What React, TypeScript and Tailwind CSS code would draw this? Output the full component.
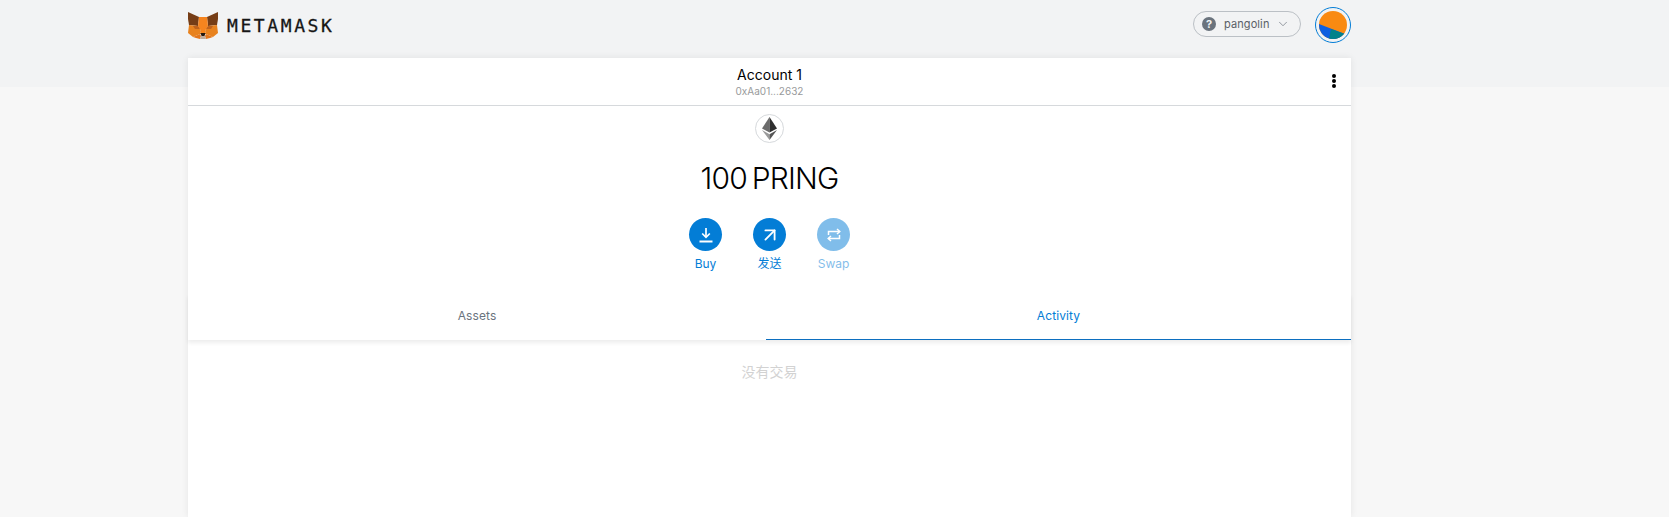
import { ArrowUpRight, ChevronDown } from 'lucide-react';

function FoxLogo() {
    return (
        <svg width="30" height="28" viewBox="0 0 30 28">
            <polygon points="0,1 11,6 10,15 1,14 0,8" fill="#763d16" />
            <polygon points="30,1 19,6 20,15 29,14 30,8" fill="#763d16" />
            <polygon points="11,6 19,6 20,15 17,20 13,20 10,15" fill="#f5841f" />
            <polygon points="1,14 10,15 13,20 12,23 5,26 0,22" fill="#e8821e" />
            <polygon points="29,14 20,15 17,20 18,23 25,26 30,22" fill="#e8821e" />
            <polygon points="5,15 10,15 12,18 7,18" fill="#c0621b" />
            <polygon points="25,15 20,15 18,18 23,18" fill="#c0621b" />
            <polygon points="12,23 13,20 17,20 18,23" fill="#f6851b" />
            <polygon points="12.5,22 17.5,22 16.5,25 13.5,25" fill="#24180e" />
            <polygon points="5,26 12,23 13,25 12,28 8,27" fill="#e4761b" />
            <polygon points="25,26 18,23 17,25 18,28 22,27" fill="#e4761b" />
            <polygon points="12,28 13,25 17,25 18,28" fill="#c0ad9e" />
        </svg>
    );
}

function EthIcon() {
    return (
        <svg width="15" height="23" viewBox="0 0 15 23">
            <polygon points="7.5,0 0,11.5 7.5,15.5" fill="#6b6b6b" />
            <polygon points="7.5,0 15,11.5 7.5,15.5" fill="#2f2f2f" />
            <polygon points="0,13 7.5,23 7.5,17.2" fill="#9a9a9a" />
            <polygon points="15,13 7.5,23 7.5,17.2" fill="#555555" />
        </svg>
    );
}

function Jazzicon() {
    return (
        <svg width="28" height="28" viewBox="0 0 28 28">
            <defs>
                <clipPath id="avatar-clip">
                    <circle cx="14" cy="14" r="14" />
                </clipPath>
            </defs>
            <g clipPath="url(#avatar-clip)">
                <rect width="28" height="28" fill="#f98a12" />
                <polygon points="0,13 26,23 26,28 0,28" fill="#0f5fe0" />
                <polygon points="10,28 12,18 26,23 23,28" fill="#01828a" />
            </g>
        </svg>
    );
}

function BuyIcon() {
    return (
        <svg width="16" height="16" viewBox="0 0 16 16" fill="none" stroke="white" strokeWidth="1.7">
            <path d="M8 1v9" />
            <path d="M4.2 6.5 8 10.3l3.8-3.8" />
            <path d="M1.5 14.5h13" strokeWidth="2" />
        </svg>
    );
}

function SwapIcon() {
    return (
        <svg width="16" height="16" viewBox="0 0 16 16" fill="none" stroke="white" strokeWidth="1.5">
            <path d="M2.5 8V4.5h11" />
            <path d="M11 2l2.8 2.5L11 7" />
            <path d="M13.5 8v3.5h-11" />
            <path d="M5 9l-2.8 2.5L5 14" />
        </svg>
    );
}

function ActionButton({ label, icon, disabled }: { label: string; icon: React.ReactNode; disabled?: boolean }) {
    return (
        <div className={`flex w-[64px] flex-col items-center ${disabled ? 'opacity-50' : ''}`}>
            <div className="flex h-[33px] w-[33px] items-center justify-center rounded-full bg-[#037dd6]">{icon}</div>
            <span className="mt-[4px] text-[12px] leading-[18px] text-[#037dd6]">{label}</span>
        </div>
    );
}

export default function App() {
    return (
        <div
            className="h-[517px] overflow-hidden bg-[#f7f7f7]"
            style={{ fontFamily: 'Inter, "Noto Sans CJK SC", sans-serif' }}
        >
            <div className="h-[87px] bg-[#f2f3f4]">
                <div className="mx-[318px] ml-[188px] flex h-[58px] items-start justify-between">
                    <div className="mt-[11px] flex items-start">
                        <FoxLogo />
                        <span
                            className="mt-[4px] ml-[9px] text-[18px] leading-[22px] tracking-[2.6px] text-[#161616] [-webkit-text-stroke:0.3px_#161616]"
                            style={{ fontFamily: '"DejaVu Sans Mono", monospace' }}
                        >
                            METAMASK
                        </span>
                    </div>
                    <div className="flex items-start">
                        <div className="mt-[11px] flex h-[26px] w-[108px] items-center rounded-full border border-[#bbc0c5] pl-[8px]">
                            <span className="flex h-[14px] w-[14px] items-center justify-center rounded-full bg-[#6a737d] text-[11px] leading-none font-bold text-[#f2f3f4]">
                                ?
                            </span>
                            <span className="ml-[8px] text-[11px] tracking-[0.1px] text-[#5a5f66]">pangolin</span>
                            <ChevronDown className="ml-[6px] h-[14px] w-[14px] text-[#6a737d]" strokeWidth={1.2} />
                        </div>
                        <div className="mt-[7px] ml-[14px] flex h-[36px] w-[36px] items-center justify-center rounded-full border border-[#037dd6]">
                            <Jazzicon />
                        </div>
                    </div>
                </div>
            </div>

            <div className="mt-[-29px] ml-[188px] h-[459px] w-[1163px] bg-white shadow-[0_0_7px_rgba(0,0,0,0.08)]">
                <div className="flex h-[48px] items-center border-b border-[#d6d9dc] pl-[60px]">
                    <div className="flex-1 text-center">
                        <div className="text-[14px] leading-[18px] text-black">Account 1</div>
                        <div className="text-[10px] leading-[14px] text-[#989a9b]">0xAa01...2632</div>
                    </div>
                    <div className="mb-[1px] flex w-[60px] flex-col items-end gap-[1px] pr-[15px]">
                        <span className="h-[4px] w-[4px] rounded-full bg-black" />
                        <span className="h-[4px] w-[4px] rounded-full bg-black" />
                        <span className="h-[4px] w-[4px] rounded-full bg-black" />
                    </div>
                </div>

                <div className="flex flex-col items-center pt-[8px]">
                    <div className="flex h-[29px] w-[29px] items-center justify-center rounded-full border border-[#d6d9dc]">
                        <EthIcon />
                    </div>
                    <div className="mt-[15px] text-[30px] leading-[40px] font-light tracking-[-0.8px] text-black [word-spacing:-3px]">
                        100 PRING
                    </div>
                    <div className="mt-[20px] flex">
                        <ActionButton label="Buy" icon={<BuyIcon />} />
                        <ActionButton label="发送" icon={<ArrowUpRight className="h-[22px] w-[22px] text-white" strokeWidth={2} />} />
                        <ActionButton label="Swap" icon={<SwapIcon />} disabled />
                    </div>
                </div>

                <div className="mt-[21px] flex h-[46px] text-[12px] tracking-[0.1px] shadow-[0_3px_4px_rgba(0,0,0,0.07)]">
                    <div className="flex w-[578px] items-center justify-center pb-[3px] text-[#6a737d]">Assets</div>
                    <div className="flex flex-1 items-center justify-center border-b border-[#0c6fc0] pb-[2px] text-[#037dd6]">
                        Activity
                    </div>
                </div>

                <div className="mt-[22px] text-center text-[14px] leading-[20px] text-[#d2d2d2]">没有交易</div>
            </div>
        </div>
    );
}
